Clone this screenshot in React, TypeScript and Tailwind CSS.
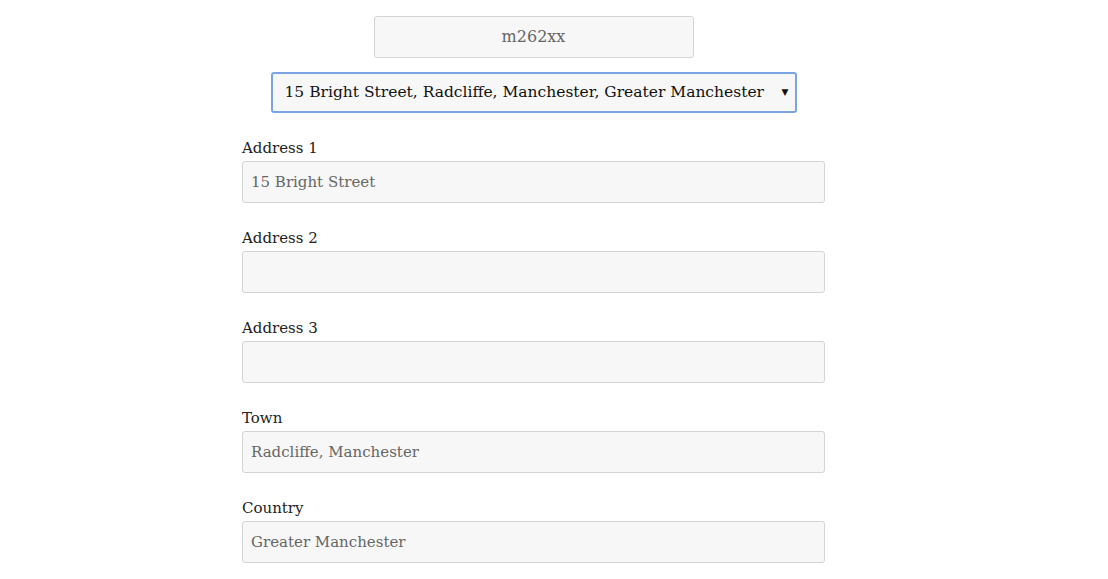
const fields = [
  { label: "Address 1", value: "15 Bright Street" },
  { label: "Address 2", value: "" },
  { label: "Address 3", value: "" },
  { label: "Town", value: "Radcliffe, Manchester" },
  { label: "Country", value: "Greater Manchester" },
];

function Field({ label, value }: { label: string; value: string }) {
  return (
    <div className="flex flex-col">
      <label className="text-[15px] leading-[22px] text-[#222] mb-[2px]">{label}</label>
      <div className="h-[42px] bg-[#f7f7f7] border border-[#d4d4d4] rounded-[3px] px-[8px] flex items-center text-[15px] text-[#666]">
        {value}
      </div>
    </div>
  );
}

export default function App() {
  return (
    <div
      className="w-[1108px] h-[579px] bg-white overflow-hidden"
      style={{ fontFamily: '"DejaVu Serif", "Liberation Serif", serif' }}
    >
      <div className="ml-[242px] w-[583px] pt-[16px] flex flex-col">
        <div className="self-center w-[320px] h-[42px] bg-[#f7f7f7] border border-[#d4d4d4] rounded-[3px] flex items-center justify-center text-[16px] text-[#666]">
          m262xx
        </div>
        <div className="self-center mt-[14px] w-[526px] h-[41px] bg-[#f7f7f7] border-2 border-[#7ba4e4] rounded-[3px] flex items-center justify-between pl-[12px] pr-[5px] text-[15.5px] text-[#111]">
          <span>15 Bright Street, Radcliffe, Manchester, Greater Manchester</span>
          <span className="text-[9px] mr-[1px]">▼</span>
        </div>
        <div className="mt-[24px] flex flex-col gap-[24px]">
          {fields.map((f) => (
            <Field key={f.label} label={f.label} value={f.value} />
          ))}
        </div>
      </div>
    </div>
  );
}
